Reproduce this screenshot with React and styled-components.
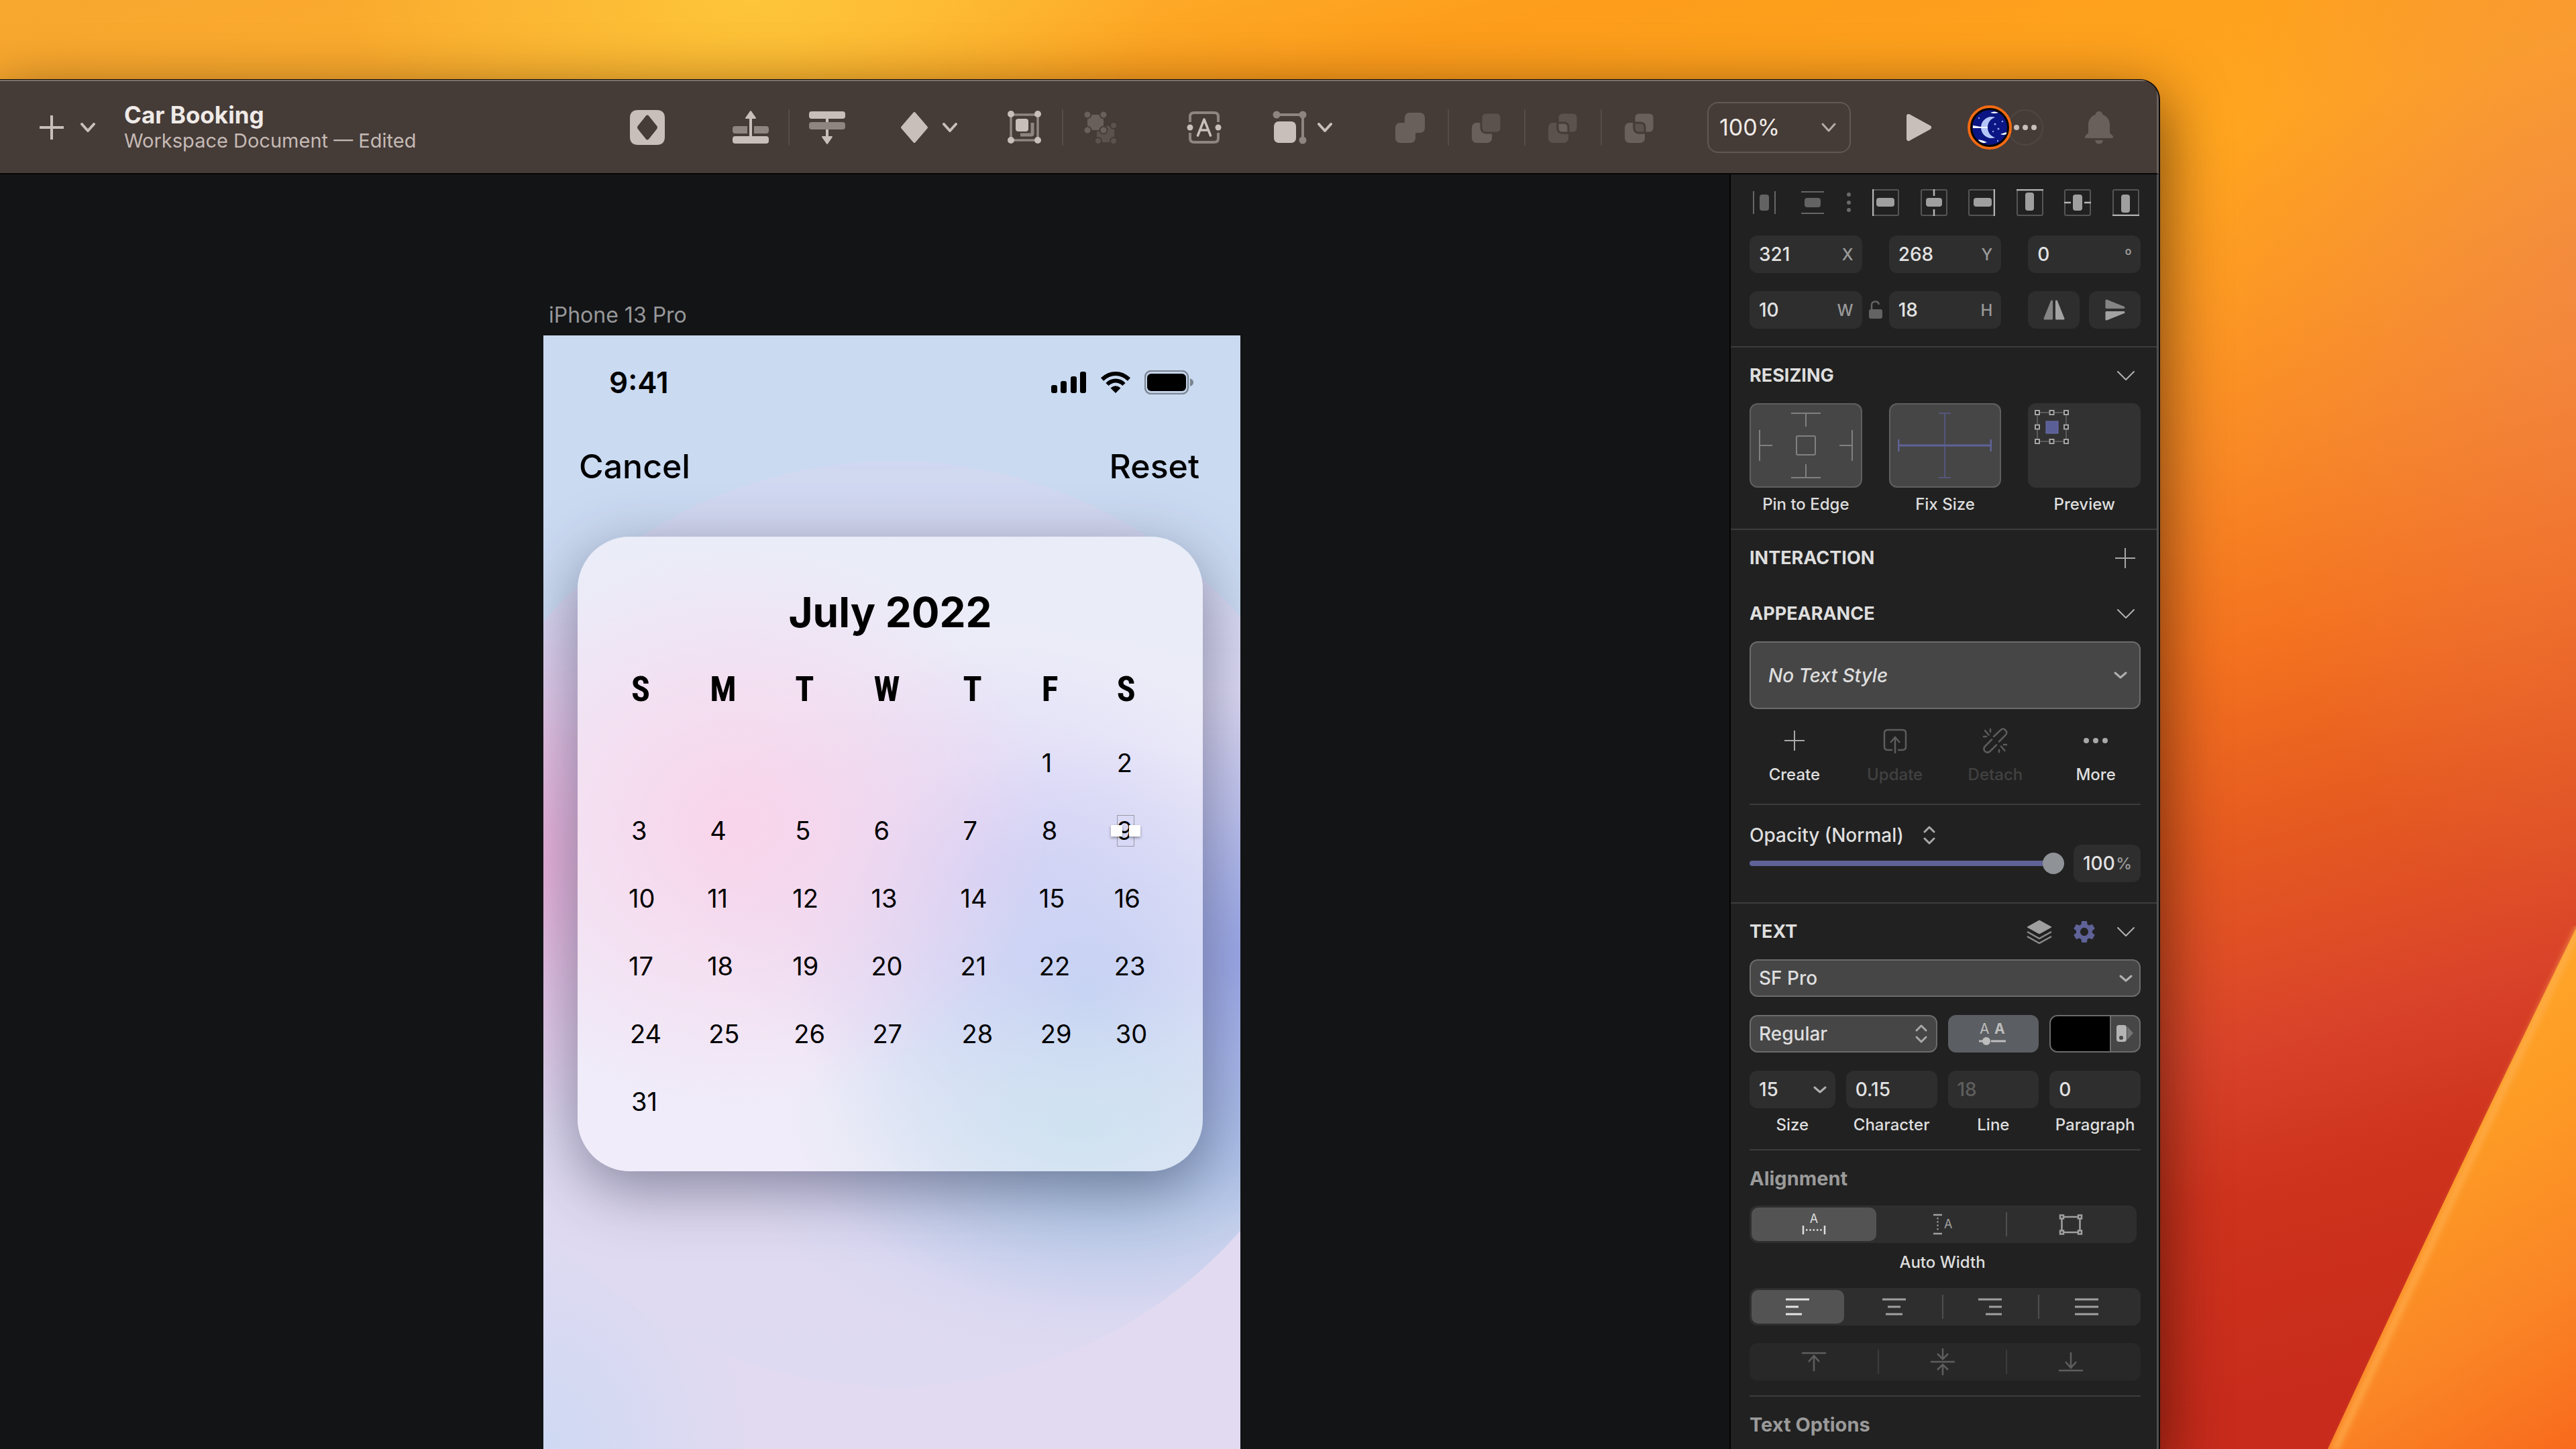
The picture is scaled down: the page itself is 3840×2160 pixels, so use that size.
import React, { useState } from 'react';
import styled, { createGlobalStyle, css } from 'styled-components';
import { MdSettings } from 'react-icons/md';

const colors = {
  bar: '#453b37',
  icon: '#c9bfba',
  iconMid: '#8f8580',
  iconDim: '#6a605b',
  iconFaint: '#5c524d',
  panel: '#212121',
  canvas: '#131416',
  field: '#2e2e2e',
  control: '#464646',
  controlBorder: '#6b6b6b',
  rule: '#3c3c3c',
  text: '#dedede',
  muted: '#9a9a9a',
  disabled: '#5e5e5e',
  accent: '#5f6297'
};

const GlobalStyle = createGlobalStyle`
  * {
    box-sizing: border-box;
  }
  body {
    margin: 0;
    background-color: #d0341d;
    font-family: 'Inter', 'Liberation Sans', sans-serif;
  }
  button, input, select {
    font: inherit;
    color: inherit;
    margin: 0;
    padding: 0;
    border: 0;
    background: none;
    min-width: 0;
  }
`;

const weeks = [
  { inset: 4, days: ['', '', '', '', '', '1', '2'] },
  { inset: 4, days: ['3', '4', '5', '6', '7', '8', '9'] },
  { inset: 0, days: ['10', '11', '12', '13', '14', '15', '16'] },
  { inset: 0, days: ['17', '18', '19', '20', '21', '22', '23'] },
  { inset: 2, days: ['24', '25', '26', '27', '28', '29', '30'] },
  { inset: 4, days: ['31', '', '', '', '', '', ''] }
];
const weekdays = ['S', 'M', 'T', 'W', 'T', 'F', 'S'];
const columnWidths = [117, 127, 117, 133, 117, 112, 100];

/* ---------- icons ---------- */

const Svg = ({ w, h, children }) => (
  <svg width={w} height={h} viewBox={`0 0 ${w} ${h}`} fill="none" aria-hidden="true">
    {children}
  </svg>
);

const Chevron = ({ w = 20, h = 11, color = '#b0b0b0', stroke = 3 }) => (
  <Svg w={w} h={h}>
    <path
      d={`M2 2L${w / 2} ${h - 2}L${w - 2} 2`}
      stroke={color}
      strokeWidth={stroke}
      strokeLinecap="round"
      strokeLinejoin="round"
    />
  </Svg>
);

const UpDown = () => (
  <Svg w={20} h={28}>
    <path
      d="M3 9L10 2L17 9M3 19L10 26L17 19"
      stroke="#a8a8a8"
      strokeWidth="3"
      strokeLinecap="round"
      strokeLinejoin="round"
    />
  </Svg>
);

const Plus = ({ size = 30, color = '#a8a8a8', stroke = 2 }) => (
  <Svg w={size} h={size}>
    <path d={`M${size / 2} 0V${size}M0 ${size / 2}H${size}`} stroke={color} strokeWidth={stroke} />
  </Svg>
);

const ComponentIcon = () => (
  <Svg w={52} h={52}>
    <path
      fillRule="evenodd"
      d="M12 0H40Q52 0 52 12V40Q52 52 40 52H12Q0 52 0 40V12Q0 0 12 0ZM24 8.500L12 23.500Q10 26 12 28.500L24 43.500Q26 45.500 28 43.500L40 28.500Q42 26 40 23.500L28 8.500Q26 6.500 24 8.500Z"
      fill={colors.icon}
    />
  </Svg>
);

const ForwardIcon = () => (
  <Svg w={54} h={52}>
    <rect x="0" y="24" width="54" height="11" rx="4" fill={colors.iconMid} />
    <rect x="22" y="14" width="10" height="26" fill={colors.bar} />
    <rect x="0" y="39" width="54" height="11" rx="4" fill={colors.icon} />
    <path d="M27 8V42" stroke={colors.icon} strokeWidth="4" />
    <path d="M27 2L34 12H20Z" fill={colors.icon} stroke={colors.icon} strokeWidth="2" strokeLinejoin="round" />
  </Svg>
);

const BackwardIcon = () => (
  <Svg w={54} h={52}>
    <path d="M27 8V42" stroke={colors.icon} strokeWidth="4" />
    <rect x="0" y="2" width="54" height="11" rx="4" fill={colors.icon} />
    <rect x="0" y="18" width="54" height="11" rx="4" fill={colors.iconMid} />
    <path d="M27 50L34 40H20Z" fill={colors.icon} stroke={colors.icon} strokeWidth="2" strokeLinejoin="round" />
  </Svg>
);

const DiamondIcon = () => (
  <Svg w={52} h={52}>
    <path
      d="M26 5L44 26L26 47L8 26Z"
      fill={colors.icon}
      stroke={colors.icon}
      strokeWidth="4"
      strokeLinejoin="round"
    />
  </Svg>
);

const GroupIcon = () => (
  <Svg w={52} h={52}>
    <rect x="6" y="7" width="40" height="38" stroke={colors.iconMid} strokeWidth="3.500" />
    <path d="M38 19V35Q38 37 36 37H20" stroke={colors.iconMid} strokeWidth="5" />
    <rect x="13" y="13" width="19" height="19" rx="4" fill={colors.icon} />
    {[[6, 6], [46, 6], [6, 45], [46, 45]].map(([x, y]) => (
      <circle key={`${x}${y}`} cx={x} cy={y} r="5" fill={colors.icon} />
    ))}
  </Svg>
);

const UngroupIcon = () => (
  <Svg w={52} h={52}>
    <rect x="20" y="24" width="26" height="24" fill={colors.iconFaint} />
    {[[45, 23], [22, 46], [45, 46]].map(([x, y]) => (
      <circle key={`${x}${y}`} cx={x} cy={y} r="5" fill={colors.iconFaint} stroke={colors.bar} strokeWidth="2" />
    ))}
    <rect x="5" y="6" width="26" height="25" fill={colors.iconDim} stroke={colors.bar} strokeWidth="2" />
    {[[6, 7], [30, 7], [6, 30], [30, 30]].map(([x, y]) => (
      <circle key={`${x}${y}`} cx={x} cy={y} r="5.500" fill={colors.iconDim} stroke={colors.bar} strokeWidth="2" />
    ))}
  </Svg>
);

const TextFrameIcon = () => (
  <Svg w={52} h={52}>
    <path
      d="M5 18V10Q5 4 11 4H41Q47 4 47 10V18M5 34V42Q5 48 11 48H41Q47 48 47 42V34"
      stroke={colors.iconMid}
      strokeWidth="4"
    />
    <circle cx="5" cy="26" r="4.500" fill={colors.icon} />
    <circle cx="47" cy="26" r="4.500" fill={colors.icon} />
    <path
      d="M16.500 38L26 14L35.500 38M19.500 30H32.500"
      stroke={colors.icon}
      strokeWidth="3.500"
      strokeLinecap="round"
      strokeLinejoin="round"
    />
  </Svg>
);

const ResizeIcon = () => (
  <Svg w={52} h={52}>
    <path d="M7 7H46V46" stroke={colors.iconMid} strokeWidth="4" />
    <circle cx="7" cy="7" r="5.500" fill={colors.iconMid} />
    <circle cx="46" cy="7" r="5.500" fill={colors.iconMid} />
    <circle cx="46" cy="45" r="5.500" fill={colors.iconMid} />
    <rect x="3" y="17" width="33" height="32" rx="7" fill={colors.icon} />
  </Svg>
);

// the four boolean operations share two overlapping squares
const BooleanIcon = ({ type }) => {
  const dim = colors.iconDim;
  const faint = colors.iconFaint;
  const tones = {
    union: [dim, dim, dim],
    subtract: [dim, faint, faint],
    intersect: [faint, faint, dim],
    difference: [dim, dim, faint]
  };
  const [back, front, overlap] = tones[type];
  const cut = type === 'union' ? 'none' : colors.bar;
  return (
    <Svg w={52} h={52}>
      <rect x="4" y="19" width="30" height="30" rx="7" fill={back} />
      <rect x="18" y="4" width="30" height="30" rx="7" fill={front} stroke={cut} strokeWidth="3" />
      {(type === 'intersect' || type === 'difference') && (
        <path
          d="M18 19H27Q34 19 34 26V34H25Q18 34 18 27Z"
          fill={overlap}
          stroke={cut}
          strokeWidth="3"
        />
      )}
    </Svg>
  );
};

const PlayIcon = () => (
  <Svg w={52} h={52}>
    <path
      d="M11 9L42 26L11 43Z"
      fill={colors.icon}
      stroke={colors.icon}
      strokeWidth="6"
      strokeLinejoin="round"
    />
  </Svg>
);

const BellIcon = () => (
  <Svg w={52} h={52}>
    <path
      d="M26 2C29 2 31 4 31.500 7C38 9 42 15 42 22V33C42 36 47 37 47 40.500Q47 42 45 42H7Q5 42 5 40.500C5 37 10 36 10 33V22C10 15 14 9 20.500 7C21 4 23 2 26 2Z"
      fill={colors.iconDim}
    />
    <path d="M20 45H32Q31 50.500 26 50.500Q21 50.500 20 45Z" fill={colors.iconDim} />
  </Svg>
);

const MoonAvatar = () => (
  <Svg w={66} h={66}>
    <circle cx="33" cy="33" r="31" fill="#050505" stroke="#f26a13" strokeWidth="4" />
    <circle cx="33" cy="33" r="26" fill="#0b1583" />
    <path d="M41 18C31 14 20 22 20 33C20 44 31 52 41 48C34 46 30 40 30 33C30 26 34 20 41 18Z" fill="#b4c6f8" />
    <path d="M8 30L20 32H30V34L20 34L8 34Z" fill="#f4f6ff" />
    <path d="M34 11Q40 8 46 11Q40 13 34 11ZM49 43L58 40V43Q53 45 49 43ZM16 51Q23 52 29 55Q22 58 17 53Z" fill="#fff" />
    <g fill="#8ea4f0">
      <circle cx="41" cy="28" r="1.600" />
      <circle cx="46" cy="35" r="1.600" />
      <circle cx="38" cy="39" r="1.200" />
      <circle cx="52" cy="24" r="1.300" />
      <circle cx="17" cy="19" r="1.200" />
      <circle cx="45" cy="53" r="1.200" />
    </g>
  </Svg>
);

const Dots = ({ color, r = 4, gap = 13 }) => (
  <Svg w={gap * 2 + r * 2} h={r * 2}>
    {[0, 1, 2].map(i => (
      <circle key={i} cx={r + i * gap} cy={r} r={r} fill={color} />
    ))}
  </Svg>
);

const DistributeIcon = ({ vertical }) => (
  <Svg w={40} h={40}>
    <g transform={vertical ? 'rotate(90 20 20)' : undefined}>
      <path d="M4 3V37M36 3V37" stroke="#666" strokeWidth="2" />
      <rect x="13" y="8" width="14" height="24" rx="4" fill="#636363" />
    </g>
  </Svg>
);

const VerticalDots = () => (
  <Svg w={6} h={40}>
    {[8, 20, 31].map(y => (
      <circle key={y} cx="3" cy={y} r="3" fill="#6a6a6a" />
    ))}
  </Svg>
);

const alignShapes = {
  left: ['M1 0V40', 6, 13, 27, 13],
  center: ['M20 0V10M20 30V40', 8, 13, 24, 13],
  right: ['M39 0V40', 8, 13, 27, 13],
  top: ['M0 1H40', 13, 5, 13, 27],
  middle: ['M0 20H10M30 20H40', 13, 8, 14, 24],
  bottom: ['M0 39H40', 13, 8, 13, 27]
};

const AlignIcon = ({ type }) => {
  const [line, x, y, width, height] = alignShapes[type];
  return (
    <Svg w={40} h={40}>
      <rect x="1" y="1" width="38" height="38" rx="2" stroke="#555" strokeWidth="2" />
      <path d={line} stroke="#b4b4b4" strokeWidth="2.500" />
      <rect x={x} y={y} width={width} height={height} rx="4" fill="#9f9f9f" />
    </Svg>
  );
};

const LockIcon = () => (
  <Svg w={20} h={28}>
    <rect x="0" y="13" width="20" height="14" rx="3" fill="#636363" />
    <path d="M4 13V7Q4 1.500 9.500 1.500Q14 1.500 15 6" stroke="#636363" strokeWidth="2.500" />
  </Svg>
);

const FlipIcon = ({ vertical }) => (
  <Svg w={34} h={34}>
    <g transform={vertical ? 'rotate(90 17 17)' : undefined} strokeLinejoin="round" strokeWidth="3">
      <path d="M13.500 4V30H3Z" fill="#858585" stroke="#858585" />
      <path d="M20.500 4V30H31Z" fill="#a3a3a3" stroke="#a3a3a3" />
    </g>
  </Svg>
);

const PinDrawing = () => (
  <Svg w={140} h={100}>
    <g stroke="#808080" strokeWidth="2">
      <path d="M48 2H92M70 2V22M48 98H92M70 98V78M1 27V73M1 50H20M139 27V73M139 50H120" />
      <rect x="56" y="36" width="28" height="28" rx="2" />
    </g>
  </Svg>
);

const FixDrawing = () => (
  <Svg w={140} h={100}>
    <path d="M70 2V98M61 2H79M61 98H79" stroke="#54567b" strokeWidth="2" />
    <path d="M1 50H139M1 41V59M139 41V59" stroke={colors.accent} strokeWidth="3" />
  </Svg>
);

const PreviewDrawing = () => (
  <Svg w={52} h={52}>
    <rect x="4" y="4" width="43" height="43" stroke="#5a5a5a" strokeWidth="2" />
    <rect x="17" y="17" width="18" height="18" fill="#5b5f97" stroke="#6b70ae" strokeWidth="1" />
    {[[4, 4], [25.5, 4], [47, 4], [4, 25.5], [47, 25.5], [4, 47], [25.5, 47], [47, 47]].map(([x, y]) => (
      <rect
        key={`${x}-${y}`}
        x={x - 3}
        y={y - 3}
        width="6"
        height="6"
        fill="#222"
        stroke="#a6a6a6"
        strokeWidth="2"
      />
    ))}
  </Svg>
);

const UpdateIcon = () => (
  <Svg w={40} h={40}>
    <g stroke="#5c5c5c" strokeWidth="2.500">
      <path d="M16 34H9Q4 34 4 29V9Q4 4 9 4H31Q36 4 36 9V29Q36 34 31 34H24" />
      <path d="M20 39V16M13 23L20 15L27 23" />
    </g>
  </Svg>
);

const DetachIcon = () => (
  <Svg w={40} h={40}>
    <g stroke="#5c5c5c" strokeWidth="2.500" strokeLinecap="round">
      <path d="M18 14L28 4.500Q32 0.500 35.500 4.500Q39 8 35.500 12L26 21.500" />
      <path d="M15 18.500L5.500 28Q1.500 32 5 36Q9 39.500 13 35.500L22 26.500" />
      <path d="M13 3V7M5 5L10.500 11.500M3 14H7M26 34V37M29 28.500L34.500 35M33 26H37" />
    </g>
  </Svg>
);

const LayersIcon = () => (
  <Svg w={38} h={36}>
    <path d="M19 1L37 11L19 21L1 11Z" fill="#9f9f9f" stroke="#9f9f9f" strokeLinejoin="round" />
    <path d="M1 18L19 28L37 18M1 25L19 35L37 25" stroke="#8a8a8a" strokeWidth="2.500" />
  </Svg>
);

const WeightIcon = () => (
  <Svg w={44} h={46}>
    <text x="2" y="23" fill="#bdbdbd" fontSize="21" fontWeight="400">A</text>
    <text x="24" y="23" fill="#bdbdbd" fontSize="21" fontWeight="700">A</text>
    <path d="M1 34H8M19 34H41" stroke="#bdbdbd" strokeWidth="3" />
    <circle cx="12" cy="34" r="6" fill="#bdbdbd" />
  </Svg>
);

const SwatchIcon = () => (
  <Svg w={28} h={26}>
    <path d="M17 2L26 12L17 22Z" fill="#747474" />
    <rect x="1" y="0" width="15" height="25" rx="4" fill="#b4b4b4" />
    <circle cx="8" cy="19" r="3" fill="#464646" />
  </Svg>
);

const AutoWidthIcon = () => (
  <Svg w={36} h={44}>
    <text x="18" y="20" fill="#dedede" fontSize="18" textAnchor="middle">A</text>
    <path d="M2 24V37M34 24V37" stroke="#dedede" strokeWidth="2.500" />
    <path d="M6 30.500H31" stroke="#dedede" strokeWidth="2.500" strokeDasharray="2.500 2.800" />
  </Svg>
);

const AutoHeightIcon = () => (
  <Svg w={36} h={32}>
    <path d="M4 2H17M4 30H17" stroke="#a0a0a0" strokeWidth="2.500" />
    <path d="M10.500 6V27" stroke="#a0a0a0" strokeWidth="2" strokeDasharray="2.500 2.800" />
    <text x="20" y="22" fill="#a0a0a0" fontSize="18">A</text>
  </Svg>
);

const FixedIcon = () => (
  <Svg w={36} h={32}>
    <g stroke="#a0a0a0" strokeWidth="2.500">
      <rect x="4.500" y="5" width="27" height="23" />
      {[[4.5, 5], [31.5, 5], [4.5, 28], [31.5, 28]].map(([x, y]) => (
        <rect key={`${x}-${y}`} x={x - 2.5} y={y - 2.5} width="5" height="5" fill="#2e2e2e" />
      ))}
    </g>
  </Svg>
);

const lineShapes = {
  left: 'M0 2H35M0 13H19M0 24H24',
  center: 'M0 2H35M8 13H27M5 24H30',
  right: 'M0 2H35M16 13H35M11 24H35',
  justify: 'M0 2H35M0 13H35M0 24H35'
};

const LinesIcon = ({ type, active }) => (
  <Svg w={36} h={26}>
    <path d={lineShapes[type]} stroke={active ? '#e4e4e4' : '#a0a0a0'} strokeWidth="3" />
  </Svg>
);

const verticalShapes = {
  top: 'M0 7H36M18 34V12M10 20L18 11L26 20',
  middle: 'M0 20H36M18 0V15M10 8L18 16L26 8M18 40V25M10 32L18 24L26 32',
  bottom: 'M0 33H36M18 6V28M10 20L18 29L26 20'
};

const VerticalIcon = ({ type }) => (
  <Svg w={36} h={40}>
    <path d={verticalShapes[type]} stroke="#5e5e5e" strokeWidth="2.500" />
  </Svg>
);

const SignalIcon = () => (
  <Svg w={53} h={34}>
    <rect x="0" y="21" width="9" height="12" rx="3" fill="#000" />
    <rect x="14" y="15" width="9" height="18" rx="3" fill="#000" />
    <rect x="29" y="8" width="9" height="25" rx="3" fill="#000" />
    <rect x="43" y="1" width="9" height="32" rx="3" fill="#000" />
  </Svg>
);

const WifiIcon = () => (
  <Svg w={46} h={34}>
    <g stroke="#000" strokeWidth="6">
      <path d="M3 12.500Q12 4 23 4Q34 4 43 12.500" />
      <path d="M10.500 20Q16 14.500 23 14.500Q30 14.500 35.500 20" />
    </g>
    <path d="M15.500 25.500Q23 19 30.500 25.500L23 33Z" fill="#000" />
  </Svg>
);

const BatteryIcon = () => (
  <Svg w={73} h={36}>
    <rect x="1" y="1" width="64" height="34" rx="9" stroke="#000" strokeOpacity=".38" strokeWidth="2.500" />
    <rect x="4" y="5" width="58" height="26" rx="6" fill="#000" />
    <path d="M68 12Q73 14 73 18Q73 22 68 24Z" fill="#000" fillOpacity=".4" />
  </Svg>
);

/* ---------- desktop and window ---------- */

const Desktop = styled.div`
  position: relative;
  display: flex;
  height: 100vh;
  overflow: hidden;
  padding: 118px 620px 0 0;
  background:
    radial-gradient(ellipse 620px 260px at 1120px 0, rgba(255, 214, 66, 0.6), transparent),
    radial-gradient(ellipse 520px 1000px at 100% 400px, rgba(228, 124, 110, 0.34), transparent),
    linear-gradient(
      165deg,
      #f8a72f 0%,
      #fdae2c 12%,
      #fd9d1b 20%,
      #ffa51f 34%,
      #fd9a23 41%,
      #f98a25 49%,
      #f4731f 58%,
      #e65b20 67%,
      #d9432a 77%,
      #ce331d 84%,
      #c82b1b 94%
    );
`;
const Wedge = styled.svg`
  position: absolute;
  right: 0;
  bottom: 0;
  width: 374px;
  height: 780px;
`;
const Window = styled.main`
  position: relative;
  flex: 1;
  min-width: 0;
  display: flex;
  flex-direction: column;
  background-color: ${colors.canvas};
  border: 2px solid #0c0a09;
  border-width: 1px 2px 0 0;
  border-radius: 0 30px 0 0;
  box-shadow: 0 30px 90px 6px rgba(30, 10, 0, 0.6);
  overflow: hidden;
`;
const Toolbar = styled.header`
  display: flex;
  align-items: center;
  height: 141px;
  padding: 0 60px 0 58px;
  background-color: ${colors.bar};
  border-top: 2px solid #7b716c;
  border-right: 3px solid #6a605b;
  border-bottom: 2px solid #080706;
  color: ${colors.icon};
`;
const ToolGroup = styled.div`
  display: flex;
  align-items: center;
  gap: ${props => props.$gap ?? 16}px;
  margin-left: ${props => props.$before || 0}px;
`;
const RightTools = styled(ToolGroup)`
  margin-left: auto;
`;
const IconButton = styled.button`
  display: flex;
  align-items: center;
  justify-content: center;
  flex: none;
  min-width: ${props => props.$width || 52}px;
  height: 52px;
`;
const ToolRule = styled.span`
  width: 2px;
  height: 54px;
  background-color: #564c47;
`;
const DocumentInfo = styled.div`
  flex: 0 0 754px;
  margin-left: 35px;
`;
const DocumentTitle = styled.h1`
  margin: 0;
  font-size: 35px;
  line-height: 40px;
  font-weight: 700;
  color: #efeae7;
`;
const DocumentState = styled.p`
  margin: 0;
  font-size: 29px;
  line-height: 38px;
  color: #c4bab5;
`;
const MoreButton = styled.button`
  display: flex;
  align-items: center;
  justify-content: center;
  width: 54px;
  height: 54px;
  margin-left: -7px;
  border: 2px solid #514742;
  border-radius: 50%;
`;
const Avatar = styled.button`
  display: flex;
  z-index: 1;
  margin-left: 47px;
`;
const Workspace = styled.div`
  flex: 1;
  min-height: 0;
  display: flex;
`;

/* ---------- shared controls ---------- */

const SelectShell = styled.div`
  display: grid;
  align-items: center;
  flex: ${props => props.$flex || 'none'};
  width: ${props => props.$width || 'auto'};
  height: ${props => props.$height || 56}px;
  font-size: 28px;
  font-weight: 500;
  ${props =>
    !props.$bare &&
    css`
      border: 2px solid ${colors.controlBorder};
      border-radius: 12px;
      background-color: ${colors.control};
    `}
  ${props =>
    props.$toolbar &&
    css`
      border-color: #615753;
      border-radius: 16px;
      background-color: transparent;
      font-size: 34px;
      font-weight: 400;
      color: #efeae7;
    `}
  > * {
    grid-area: 1 / 1;
  }
  > svg {
    justify-self: end;
    margin-right: ${props => (props.$bare ? 0 : props.$inset || 12)}px;
    pointer-events: none;
  }
`;
const NativeSelect = styled.select`
  appearance: none;
  width: 100%;
  height: 100%;
  padding: 0 ${props => (props.$pad === undefined ? 12 : props.$pad)}px;
  padding-right: 34px;
  outline: none;
  font-style: ${props => (props.$italic ? 'italic' : 'normal')};
`;

const Picker = ({ label, value, icon, pad, italic, ...shell }) => (
  <SelectShell {...shell}>
    <NativeSelect aria-label={label} defaultValue={value} $pad={pad} $italic={italic}>
      <option>{value}</option>
    </NativeSelect>
    {icon}
  </SelectShell>
);

const FieldBox = styled.label`
  display: flex;
  align-items: center;
  height: 56px;
  padding: 0 13px 0 14px;
  border-radius: 12px;
  background-color: ${colors.field};
  font-size: 28px;
  font-weight: 500;
  input {
    flex: 1;
    width: 0;
    outline: none;
    color: ${props => (props.$disabled ? colors.disabled : '#e2e2e2')};
  }
`;
const Unit = styled.span`
  font-size: 24px;
  font-weight: 500;
  color: ${colors.muted};
`;
const Caption = styled.span`
  display: block;
  margin-top: ${props => props.$space || 10}px;
  font-size: 24px;
  line-height: 30px;
  font-weight: 500;
  text-align: center;
  white-space: nowrap;
  color: ${props => (props.$disabled ? '#414141' : colors.text)};
`;

/* ---------- inspector ---------- */

const Inspector = styled.aside`
  flex: 0 0 640px;
  overflow: hidden;
  background-color: ${colors.panel};
  border-left: 2px solid #030303;
  border-right: 3px solid #505050;
  color: ${colors.text};
`;
const Section = styled.section`
  padding: 0 24px ${props => props.$end || 0}px 28px;
  border-bottom: 2px solid ${colors.rule};
`;
const InnerRule = styled.hr`
  height: 2px;
  margin: ${props => props.$above}px 0 0;
  border: 0;
  background-color: ${colors.rule};
`;
const SectionHead = styled.div`
  display: flex;
  align-items: center;
  gap: 28px;
  height: 83px;
  padding-right: 8px;
`;
const SubHead = styled(SectionHead)`
  height: 82px;
`;
const SectionTitle = styled.h2`
  flex: 1;
  margin: 0;
  font-size: 27px;
  font-weight: 700;
`;
const SubTitle = styled.h3`
  margin: 0;
  font-size: 29px;
  font-weight: 700;
  color: ${colors.muted};
`;
const PlainButton = styled.button`
  display: flex;
  align-items: center;
  justify-content: center;
`;
const AlignRow = styled.div`
  display: flex;
  justify-content: space-between;
  padding: 22px 2px 2px;
`;
const Grid3 = styled.div`
  display: grid;
  grid-template-columns: repeat(3, 1fr);
  column-gap: 40px;
  margin-top: ${props => props.$above || 0}px;
`;
const LinkedField = styled.div`
  display: grid;
  grid-template-columns: 1fr 0;
  align-items: center;
  svg {
    margin-left: 10px;
  }
`;
const FlipPair = styled.div`
  display: grid;
  grid-template-columns: 1fr 1fr;
  gap: 14px;
`;
const FlipButton = styled(PlainButton)`
  border-radius: 12px;
  background-color: ${colors.field};
`;
const ConstraintBox = styled.button`
  display: flex;
  align-items: center;
  justify-content: center;
  width: 100%;
  height: 126px;
  border: 2px solid #5f5f5f;
  border-radius: 12px;
  background-color: ${colors.control};
`;
const PreviewBox = styled.div`
  height: 126px;
  padding: 10px;
  border-radius: 12px;
  background-color: #323232;
`;
const StyleActions = styled.div`
  display: grid;
  grid-template-columns: repeat(4, 1fr);
  margin: 27px -8px 0;
`;
const StyleAction = styled.button`
  display: flex;
  flex-direction: column;
  align-items: center;
`;
const ActionIcon = styled.span`
  display: flex;
  align-items: center;
  height: 40px;
`;
const OpacityMode = styled.div`
  display: flex;
  margin-top: 28px;
`;
const OpacityRow = styled.div`
  display: flex;
  align-items: center;
  gap: 14px;
`;
const Slider = styled.input`
  appearance: none;
  flex: 1;
  height: 32px;
  &::-webkit-slider-runnable-track {
    height: 8px;
    border-radius: 4px;
    background-color: ${colors.accent};
  }
  &::-webkit-slider-thumb {
    appearance: none;
    width: 32px;
    height: 32px;
    margin-top: -12px;
    border-radius: 50%;
    background-color: #8f9297;
  }
`;
const PercentField = styled(FieldBox)`
  width: 100px;
`;
const Grid4 = styled.div`
  display: grid;
  grid-template-columns: 128fr 136fr 136fr 136fr;
  column-gap: 16px;
  margin-top: 27px;
`;
const WideCell = styled.div`
  grid-column: span 2;
`;
const WeightButton = styled(PlainButton)`
  border-radius: 12px;
  background-color: #5b5e62;
`;
const ColorButton = styled.button`
  display: grid;
  grid-template-columns: 1fr 42px;
  align-items: center;
  justify-items: center;
  overflow: hidden;
  border: 2px solid ${colors.controlBorder};
  border-radius: 12px;
  background-color: ${colors.control};
`;
const ColorChip = styled.span`
  width: 100%;
  height: 100%;
  border-right: 2px solid ${colors.controlBorder};
  background-color: #000;
`;
const FieldColumn = styled.div`
  min-width: 0;
`;
const Segments = styled.div`
  display: flex;
  align-items: center;
  height: 56px;
  margin-top: ${props => props.$above || 0}px;
  margin-right: ${props => (props.$narrow ? 6 : 0)}px;
  padding-right: ${props => (props.$narrow ? 2 : 8)}px;
  border-radius: 12px;
  background-color: ${props => (props.$disabled ? '#282828' : colors.field)};
`;
const Segment = styled.button`
  display: flex;
  align-items: center;
  justify-content: center;
  flex: 1;
  height: 50px;
  margin: 0 3px;
  border-radius: 10px;
  background-color: ${props => (props.$active ? '#535353' : 'transparent')};
`;
const SegmentRule = styled.span`
  width: 2px;
  height: 36px;
  margin: 0 -1px;
  background-color: ${props => (props.$disabled ? '#3c3c3c' : '#4e4e4e')};
`;
const AutoLabel = styled.div`
  padding-right: 8px;
`;

/* ---------- canvas ---------- */

const Canvas = styled.section`
  flex: 1;
  min-width: 0;
  display: flex;
  flex-direction: column;
  padding: 190px 729px 0 810px;
`;
const ArtboardName = styled.p`
  margin: 0 8px 10px;
  font-size: 32px;
  line-height: 40px;
  color: #97989a;
`;
const Artboard = styled.div`
  position: relative;
  flex: 1;
  min-height: 0;
  overflow: hidden;
  background:
    radial-gradient(ellipse 320px 380px at 0 100%, #cfd9f3, rgba(207, 217, 243, 0)),
    linear-gradient(#cadaf1 0, #cadaf1 440px, #dedaf1 1000px, #e2daf1 1500px);
  color: #000;
`;
const Halo = styled.div`
  position: absolute;
  top: 187px;
  left: -167px;
  width: 1380px;
  height: 1380px;
  border-radius: 50%;
  background:
    radial-gradient(ellipse 290px 420px at 150px 590px, #e6add7, rgba(230, 173, 215, 0)),
    radial-gradient(ellipse 380px 400px at 1220px 740px, #98a6e6, rgba(152, 166, 230, 0)),
    radial-gradient(ellipse 460px 270px at 1020px 1000px, #a3c3e0, rgba(163, 195, 224, 0)),
    radial-gradient(ellipse 600px 420px at 1000px 920px, rgba(190, 202, 240, 0.9), rgba(190, 202, 240, 0)),
    linear-gradient(#dcd6f0, #dad8f1 50%, #dfdaf1 80%, #dedaf1);
  mask-image: linear-gradient(rgba(0, 0, 0, 0.35), #000 30%);
`;
const Phone = styled.div`
  position: relative;
`;
const StatusBar = styled.div`
  display: flex;
  align-items: center;
  gap: 20px;
  height: 140px;
  padding: 0 70px 0 98px;
`;
const Clock = styled.span`
  flex: 1;
  font-size: 44px;
  font-weight: 600;
`;
const NavBar = styled.nav`
  display: flex;
  align-items: center;
  justify-content: space-between;
  height: 110px;
  padding: 0 61px 0 53px;
`;
const NavButton = styled.button`
  font-size: 50px;
  font-weight: 500;
`;
const Card = styled.div`
  margin: 50px 56px 0 51px;
  padding: 73px 32px 54px 76px;
  border-radius: 78px;
  background:
    radial-gradient(ellipse 460px 420px at 240px 430px, #f9d4ea, rgba(249, 212, 234, 0)),
    radial-gradient(ellipse 440px 240px at 750px 880px, rgba(206, 227, 240, 0.9), rgba(206, 227, 240, 0)),
    radial-gradient(ellipse 440px 380px at 760px 680px, #c6d1f3, rgba(198, 209, 243, 0)),
    radial-gradient(ellipse 460px 340px at 620px 500px, rgba(216, 208, 247, 0.9), rgba(216, 208, 247, 0)),
    linear-gradient(190deg, #e9edf8, #edebf8 40%, #f1ecf9);
  box-shadow: 0 26px 90px rgba(45, 45, 75, 0.5);
`;
const MonthTitle = styled.h2`
  margin: 0 44px 15px 0;
  text-align: center;
  font-size: 62px;
  line-height: 80px;
  font-weight: 700;
`;
const Month = styled.table`
  table-layout: fixed;
  width: 100%;
  border-collapse: collapse;
  font-size: 38px;
`;
const WeekdayCell = styled.th`
  height: 118px;
  padding: 0 0 0 4px;
  text-align: left;
  font-family: 'Roboto Condensed', 'Roboto', sans-serif;
  font-size: 52px;
  font-weight: 700;
`;
const DayCell = styled.td`
  height: 101px;
  padding: 0 0 0 ${props => props.$inset}px;
`;
const SelectedDay = styled.span`
  position: relative;
`;
const SelectionFrame = styled.span`
  position: absolute;
  top: 0;
  left: 0;
  width: 26px;
  height: 47px;
  border: 1px solid #9a9aa6;
  &::before,
  &::after {
    content: '';
    position: absolute;
    top: 14px;
    width: 17px;
    height: 17px;
    background-color: #fff;
    box-shadow: 0 2px 4px rgba(0, 0, 0, 0.35);
  }
  &::before {
    left: -10px;
  }
  &::after {
    right: -10px;
  }
`;

const TopBar = () => (
  <Toolbar>
    <ToolGroup>
      <IconButton $width={38} aria-label="Insert">
        <Plus size={36} color={colors.icon} stroke={4} />
      </IconButton>
      <IconButton $width={38} aria-label="Insert options">
        <Chevron w={22} h={14} color={colors.icon} stroke={4} />
      </IconButton>
    </ToolGroup>
    <DocumentInfo>
      <DocumentTitle>Car Booking</DocumentTitle>
      <DocumentState>Workspace Document — Edited</DocumentState>
    </DocumentInfo>
    <IconButton aria-label="Create symbol"><ComponentIcon /></IconButton>
    <ToolGroup $gap={29} $before={101}>
      <IconButton aria-label="Bring forward"><ForwardIcon /></IconButton>
      <ToolRule />
      <IconButton aria-label="Send backward"><BackwardIcon /></IconButton>
    </ToolGroup>
    <ToolGroup $before={77}>
      <IconButton aria-label="Edit shape"><DiamondIcon /></IconButton>
      <Chevron w={22} h={14} color={colors.icon} stroke={4} />
    </ToolGroup>
    <ToolGroup $gap={30} $before={74}>
      <IconButton aria-label="Group"><GroupIcon /></IconButton>
      <ToolRule />
      <IconButton aria-label="Ungroup"><UngroupIcon /></IconButton>
    </ToolGroup>
    <ToolGroup $before={102}>
      <IconButton aria-label="Text frame"><TextFrameIcon /></IconButton>
    </ToolGroup>
    <ToolGroup $before={75}>
      <IconButton aria-label="Scale"><ResizeIcon /></IconButton>
      <Chevron w={22} h={14} color={colors.icon} stroke={4} />
    </ToolGroup>
    <ToolGroup $gap={30} $before={90}>
      <IconButton aria-label="Union"><BooleanIcon type="union" /></IconButton>
      <ToolRule />
      <IconButton aria-label="Subtract"><BooleanIcon type="subtract" /></IconButton>
      <ToolRule />
      <IconButton aria-label="Intersect"><BooleanIcon type="intersect" /></IconButton>
      <ToolRule />
      <IconButton aria-label="Difference"><BooleanIcon type="difference" /></IconButton>
    </ToolGroup>
    <RightTools $gap={0}>
      <Picker
        label="Zoom"
        value="100%"
        pad={16}
        icon={<Chevron w={22} h={14} color="#b5aca7" />}
        $toolbar
        $width="214px"
        $height={76}
        $inset={20}
      />
      <ToolGroup $before={75}>
        <IconButton aria-label="Preview"><PlayIcon /></IconButton>
      </ToolGroup>
      <Avatar aria-label="Account"><MoonAvatar /></Avatar>
      <MoreButton aria-label="More people"><Dots color={colors.icon} /></MoreButton>
      <ToolGroup $before={57}>
        <IconButton aria-label="Notifications"><BellIcon /></IconButton>
      </ToolGroup>
    </RightTools>
  </Toolbar>
);

const Calendar = () => (
  <Card>
    <MonthTitle>July 2022</MonthTitle>
    <Month>
      <colgroup>
        {columnWidths.map((width, i) => (
          <col key={i} width={width} />
        ))}
      </colgroup>
      <thead>
        <tr>
          {weekdays.map((day, i) => (
            <WeekdayCell key={i}>{day}</WeekdayCell>
          ))}
        </tr>
      </thead>
      <tbody>
        {weeks.map((week, row) => (
          <tr key={row}>
            {week.days.map((day, i) => (
              <DayCell key={i} $inset={week.inset}>
                {day === '9' ? (
                  <SelectedDay>
                    9<SelectionFrame />
                  </SelectedDay>
                ) : (
                  day
                )}
              </DayCell>
            ))}
          </tr>
        ))}
      </tbody>
    </Month>
  </Card>
);

const Head = ({ title, children }) => (
  <SectionHead>
    <SectionTitle>{title}</SectionTitle>
    {children || (
      <PlainButton aria-label={`Collapse ${title}`}>
        <Chevron w={28} h={16} stroke={2} />
      </PlainButton>
    )}
  </SectionHead>
);

const Field = ({ unit, value }) => (
  <FieldBox>
    <input defaultValue={value} />
    <Unit>{unit}</Unit>
  </FieldBox>
);

const NumberColumn = ({ id, label, value, disabled, icon }) => (
  <FieldColumn>
    <FieldBox $disabled={disabled} htmlFor={id}>
      <input id={id} defaultValue={value} disabled={disabled} />
      {icon}
    </FieldBox>
    <Caption as="label" htmlFor={id}>{label}</Caption>
  </FieldColumn>
);

const PositionSection = () => (
  <Section $end={26}>
    <AlignRow>
      <PlainButton aria-label="Distribute horizontally"><DistributeIcon /></PlainButton>
      <PlainButton aria-label="Distribute vertically"><DistributeIcon vertical /></PlainButton>
      <VerticalDots />
      {Object.keys(alignShapes).map(type => (
        <PlainButton key={type} aria-label={`Align ${type}`}><AlignIcon type={type} /></PlainButton>
      ))}
    </AlignRow>
    <Grid3 $above={27}>
      <Field value="321" unit="X" />
      <Field value="268" unit="Y" />
      <Field value="0" unit="º" />
    </Grid3>
    <Grid3 $above={27}>
      <LinkedField>
        <Field value="10" unit="W" />
        <LockIcon />
      </LinkedField>
      <Field value="18" unit="H" />
      <FlipPair>
        <FlipButton aria-label="Flip horizontally"><FlipIcon /></FlipButton>
        <FlipButton aria-label="Flip vertically"><FlipIcon vertical /></FlipButton>
      </FlipPair>
    </Grid3>
  </Section>
);

const ResizingSection = () => (
  <Section $end={21}>
    <Head title="RESIZING" />
    <Grid3>
      <div>
        <ConstraintBox aria-label="Pin to Edge"><PinDrawing /></ConstraintBox>
        <Caption>Pin to Edge</Caption>
      </div>
      <div>
        <ConstraintBox aria-label="Fix Size"><FixDrawing /></ConstraintBox>
        <Caption>Fix Size</Caption>
      </div>
      <div>
        <PreviewBox><PreviewDrawing /></PreviewBox>
        <Caption>Preview</Caption>
      </div>
    </Grid3>
  </Section>
);

const AppearanceSection = () => {
  const actions = [
    { label: 'Create', icon: <Plus /> },
    { label: 'Update', icon: <UpdateIcon />, disabled: true },
    { label: 'Detach', icon: <DetachIcon />, disabled: true },
    { label: 'More', icon: <Dots color="#a8a8a8" gap={14} /> }
  ];
  return (
    <Section $end={30}>
      <Head title="INTERACTION">
        <PlainButton aria-label="Add interaction"><Plus /></PlainButton>
      </Head>
      <Head title="APPEARANCE" />
      <Picker
        label="Text style"
        value="No Text Style"
        icon={<Chevron />}
        pad={26}
        italic
        $height={101}
        $inset={18}
      />
      <StyleActions>
        {actions.map(action => (
          <StyleAction key={action.label} disabled={action.disabled}>
            <ActionIcon>{action.icon}</ActionIcon>
            <Caption $space={16} $disabled={action.disabled}>{action.label}</Caption>
          </StyleAction>
        ))}
      </StyleActions>
      <InnerRule $above={28} />
      <OpacityMode>
        <Picker label="Blend mode" value="Opacity (Normal)" icon={<UpDown />} pad={0} $bare $height={31} $width="278px" />
      </OpacityMode>
      <OpacityRow>
        <Slider type="range" aria-label="Opacity" min="0" max="100" defaultValue="100" />
        <PercentField>
          <input defaultValue="100" />
          <Unit>%</Unit>
        </PercentField>
      </OpacityRow>
    </Section>
  );
};

const TextSection = () => {
  const [sizing, setSizing] = useState(0);
  const [align, setAlign] = useState('left');
  const sizingIcons = [<AutoWidthIcon />, <AutoHeightIcon />, <FixedIcon />];
  return (
    <Section as="div">
      <Head title="TEXT">
        <PlainButton aria-label="Layers"><LayersIcon /></PlainButton>
        <PlainButton aria-label="Text settings">
          <MdSettings size={40} color={colors.accent} />
        </PlainButton>
        <PlainButton aria-label="Collapse text">
          <Chevron w={28} h={16} stroke={2} />
        </PlainButton>
      </Head>
      <Picker label="Font family" value="SF Pro" icon={<Chevron />} $inset={10} />
      <Grid4>
        <WideCell>
          <Picker label="Font weight" value="Regular" icon={<UpDown />} />
        </WideCell>
        <WeightButton aria-label="Variable font"><WeightIcon /></WeightButton>
        <ColorButton aria-label="Text color">
          <ColorChip />
          <SwatchIcon />
        </ColorButton>
      </Grid4>
      <Grid4>
        <NumberColumn id="size" label="Size" value="15" icon={<Chevron />} />
        <NumberColumn id="character" label="Character" value="0.15" />
        <NumberColumn id="line" label="Line" value="18" disabled />
        <NumberColumn id="paragraph" label="Paragraph" value="0" />
      </Grid4>
      <InnerRule $above={21} />
      <SubHead>
        <SubTitle>Alignment</SubTitle>
      </SubHead>
      <Segments $narrow>
        {sizingIcons.map((icon, i) => (
          <React.Fragment key={i}>
            {i > 0 && i !== sizing && i - 1 !== sizing && <SegmentRule />}
            <Segment aria-label={`Sizing ${i + 1}`} $active={i === sizing} onClick={() => setSizing(i)}>
              {icon}
            </Segment>
          </React.Fragment>
        ))}
      </Segments>
      <AutoLabel>
        <Caption $space={14}>Auto Width</Caption>
      </AutoLabel>
      <Segments $above={23}>
        {Object.keys(lineShapes).map((type, i, all) => (
          <React.Fragment key={type}>
            {i > 0 && type !== align && all[i - 1] !== align && <SegmentRule />}
            <Segment aria-label={`Text ${type}`} $active={type === align} onClick={() => setAlign(type)}>
              <LinesIcon type={type} active={type === align} />
            </Segment>
          </React.Fragment>
        ))}
      </Segments>
      <Segments $above={26} $disabled>
        {Object.keys(verticalShapes).map((type, i) => (
          <React.Fragment key={type}>
            {i > 0 && <SegmentRule $disabled />}
            <Segment aria-label={`Vertical ${type}`} disabled>
              <VerticalIcon type={type} />
            </Segment>
          </React.Fragment>
        ))}
      </Segments>
      <InnerRule $above={22} />
      <SubHead>
        <SubTitle>Text Options</SubTitle>
      </SubHead>
    </Section>
  );
};

const App = () => (
  <Desktop>
    <GlobalStyle />
    <Wedge viewBox="0 0 374 780" preserveAspectRatio="none" aria-hidden="true">
      <defs>
        <linearGradient id="wedge" x1="0.7" y1="0" x2="1" y2="1">
          <stop offset="0" stopColor="#ffaa2b" />
          <stop offset="0.35" stopColor="#fd9a25" />
          <stop offset="0.7" stopColor="#fa8526" />
          <stop offset="1" stopColor="#f86a1c" />
        </linearGradient>
        <filter id="soft" x="-10%" y="-10%" width="120%" height="120%">
          <feGaussianBlur stdDeviation="5" />
        </filter>
      </defs>
      <path d="M374 4Q180 400 4 780H374Z" fill="url(#wedge)" />
      <path d="M382 -4Q192 398 14 782" stroke="#ffb04f" strokeWidth="7" fill="none" filter="url(#soft)" />
    </Wedge>
    <Window>
      <TopBar />
      <Workspace>
        <Canvas>
          <ArtboardName>iPhone 13 Pro</ArtboardName>
          <Artboard>
            <Halo />
            <Phone>
              <StatusBar>
                <Clock>9:41</Clock>
                <SignalIcon />
                <WifiIcon />
                <BatteryIcon />
              </StatusBar>
              <NavBar>
                <NavButton>Cancel</NavButton>
                <NavButton>Reset</NavButton>
              </NavBar>
              <Calendar />
            </Phone>
          </Artboard>
        </Canvas>
        <Inspector>
          <PositionSection />
          <ResizingSection />
          <AppearanceSection />
          <TextSection />
        </Inspector>
      </Workspace>
    </Window>
  </Desktop>
);

export default App;
